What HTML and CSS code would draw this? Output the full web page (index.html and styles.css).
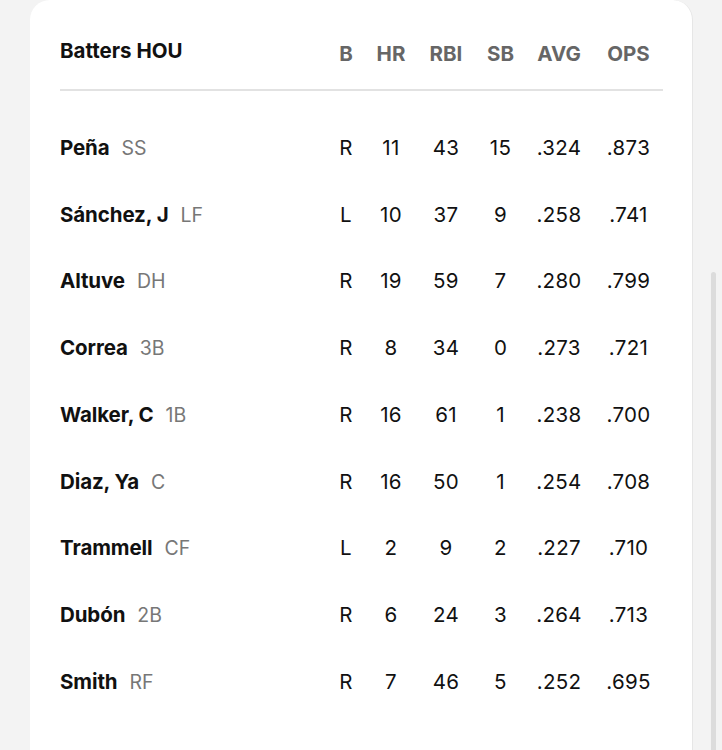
FILE: index.html
```html
<!DOCTYPE html>
<html>
<head>
<meta charset="utf-8">
<link rel="stylesheet" href="styles.css">
</head>
<body>
<div class="page">
  <div class="card">
    <div class="head">
      <div class="title">Batters HOU</div>
      <div class="col">B</div>
      <div class="col">HR</div>
      <div class="col">RBI</div>
      <div class="col">SB</div>
      <div class="col">AVG</div>
      <div class="col">OPS</div>
    </div>
    <div class="rows">
      <div class="row"><div class="name"><b>Peña</b><span class="pos">SS</span></div><div>R</div><div>11</div><div>43</div><div>15</div><div>.324</div><div>.873</div></div>
      <div class="row"><div class="name"><b>Sánchez, J</b><span class="pos">LF</span></div><div>L</div><div>10</div><div>37</div><div>9</div><div>.258</div><div>.741</div></div>
      <div class="row"><div class="name"><b>Altuve</b><span class="pos">DH</span></div><div>R</div><div>19</div><div>59</div><div>7</div><div>.280</div><div>.799</div></div>
      <div class="row"><div class="name"><b>Correa</b><span class="pos">3B</span></div><div>R</div><div>8</div><div>34</div><div>0</div><div>.273</div><div>.721</div></div>
      <div class="row"><div class="name"><b>Walker, C</b><span class="pos">1B</span></div><div>R</div><div>16</div><div>61</div><div>1</div><div>.238</div><div>.700</div></div>
      <div class="row"><div class="name"><b>Diaz, Ya</b><span class="pos">C</span></div><div>R</div><div>16</div><div>50</div><div>1</div><div>.254</div><div>.708</div></div>
      <div class="row"><div class="name"><b>Trammell</b><span class="pos">CF</span></div><div>L</div><div>2</div><div>9</div><div>2</div><div>.227</div><div>.710</div></div>
      <div class="row"><div class="name"><b>Dubón</b><span class="pos">2B</span></div><div>R</div><div>6</div><div>24</div><div>3</div><div>.264</div><div>.713</div></div>
      <div class="row"><div class="name"><b>Smith</b><span class="pos">RF</span></div><div>R</div><div>7</div><div>46</div><div>5</div><div>.252</div><div>.695</div></div>
    </div>
  </div>
  <div class="track"><div class="thumb"></div></div>
</div>
</body>
</html>
```

FILE: styles.css
```css
* { box-sizing: border-box; }
html, body { margin: 0; padding: 0; }
body {
  background: #f3f3f3;
  font-family: Inter, "Liberation Sans", sans-serif;
  color: #111;
  overflow: hidden;
}
.page {
  display: flex;
  height: 750px;
}
.card {
  margin-left: 30px;
  width: 663px;
  height: 750px;
  background: #fff;
  border-radius: 20px 20px 0 0;
  border-right: 1px solid #e6e6e6;
  padding: 0 29px 0 30px;
}
.head, .row {
  display: grid;
  grid-template-columns: 1fr 48px 42px 68px 41px 76px 63px;
  padding-right: 3px;
  align-items: center;
}
.head {
  height: 91px;
  padding-top: 28px;
  padding-bottom: 21px;
  border-bottom: 2px solid #e2e2e2;
}
.title {
  font-weight: 700;
  font-size: 20.5px;
  line-height: 40px;
  color: #111;
  letter-spacing: 0;
}
.col {
  text-align: center;
  font-weight: 700;
  font-size: 20.5px;
  line-height: 40px;
  color: #666;
  padding-top: 6px;
}
.rows {
  padding-top: 23.5px;
}
.row {
  height: 66.75px;
  font-size: 20.5px;
  line-height: 30px;
  text-align: center;
  letter-spacing: 0.3px;
}
.name {
  text-align: left;
  letter-spacing: 0;
}
.name b {
  font-weight: 700;
  letter-spacing: -0.1px;
}
.pos {
  color: #777;
  margin-left: 12px;
  font-size: 19.5px;
}
.track {
  margin-left: 18px;
  padding-top: 272px;
}
.thumb {
  width: 5px;
  height: 478px;
  background: #dcdcdc;
  border-radius: 3px 3px 0 0;
}
```
